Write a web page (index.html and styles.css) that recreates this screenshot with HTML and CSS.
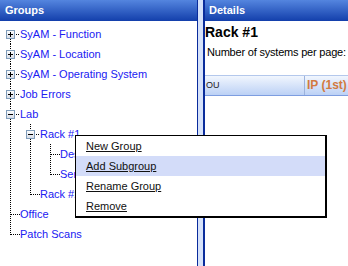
FILE: index.html
```html
<!DOCTYPE html>
<html lang="en">
<head>
    <meta charset="UTF-8">
    <title>Groups</title>
    <link rel="stylesheet" href="styles.css">
</head>
<body>
    <div class="app">
        <!-- Groups tree -->
        <div class="groups">
            <div class="panel-head">Groups</div>
            <div class="tree">
                <div class="node"><span class="cell exp first"><span class="box plus"></span></span><a class="label">SyAM - Function</a></div>
                <div class="node"><span class="cell exp"><span class="box plus"></span></span><a class="label">SyAM - Location</a></div>
                <div class="node"><span class="cell exp"><span class="box plus"></span></span><a class="label">SyAM - Operating System</a></div>
                <div class="node"><span class="cell exp"><span class="box plus"></span></span><a class="label">Job Errors</a></div>
                <div class="node"><span class="cell exp"><span class="box minus"></span></span><a class="label">Lab</a></div>
                <div class="node"><span class="cell pipe"></span><span class="cell exp"><span class="box minus"></span></span><a class="label">Rack #1</a></div>
                <div class="node"><span class="cell pipe"></span><span class="cell pipe"></span><span class="cell tee"></span><a class="label">Desktops</a></div>
                <div class="node"><span class="cell pipe"></span><span class="cell pipe"></span><span class="cell ell"></span><a class="label">Servers</a></div>
                <div class="node"><span class="cell pipe"></span><span class="cell ell"></span><a class="label">Rack #2</a></div>
                <div class="node"><span class="cell tee"></span><a class="label">Office</a></div>
                <div class="node"><span class="cell ell"></span><a class="label">Patch Scans</a></div>
            </div>
        </div>

        <div class="splitter"></div>

        <!-- Details -->
        <div class="details">
            <div class="panel-head">Details</div>
            <div class="details-body">
                <h2 class="title">Rack #1</h2>
                <p class="per-page">Number of systems per page:</p>
                <div class="grid-head">
                    <div class="col col-ou">OU</div>
                    <div class="col col-ip">IP (1st)</div>
                </div>
            </div>
        </div>

        <!-- Context menu -->
        <ul class="context-menu">
            <li><a href="#">New Group</a></li>
            <li class="active"><a href="#">Add Subgroup</a></li>
            <li><a href="#">Rename Group</a></li>
            <li><a href="#">Remove</a></li>
        </ul>
    </div>
</body>
</html>
```

FILE: styles.css
```css
* {
    margin: 0;
    padding: 0;
    box-sizing: border-box;
}

body {
    font-family: 'Liberation Sans', Arial, sans-serif;
    font-size: 11px;
    background: white;
}

.app {
    --dv: repeating-linear-gradient(to bottom, #000 0 1px, transparent 1px 2px);
    --dh: repeating-linear-gradient(to right, #000 0 1px, transparent 1px 2px);
    position: relative;
    display: flex;
    height: 266px;
    overflow: hidden;
}

/* Panel headers */
.panel-head {
    height: 21px;
    line-height: 21px;
    padding-left: 5px;
    color: white;
    font-weight: bold;
    font-size: 11px;
    background: linear-gradient(#5485df, #133fab);
    white-space: nowrap;
}

/* Groups */
.groups {
    width: 198px;
    flex: none;
    border-right: 1px solid #0a2c9c;
}

.tree {
    padding-top: 3px;
}

.node {
    display: flex;
    height: 20px;
    line-height: 20px;
    white-space: nowrap;
}

.label {
    color: #2020f2;
    text-decoration: none;
}

.cell {
    width: 20px;
    height: 20px;
    flex: none;
    background-repeat: no-repeat;
}

.cell.pipe {
    background-image: var(--dv);
    background-position: 10px 0;
    background-size: 1px 20px;
}

.cell.tee {
    background-image: var(--dv), var(--dh);
    background-position: 10px 0, 11px 10px;
    background-size: 1px 20px, 9px 1px;
}

.cell.ell {
    background-image: var(--dv), var(--dh);
    background-position: 10px 0, 11px 10px;
    background-size: 1px 11px, 9px 1px;
}

.cell.exp {
    background-image: var(--dv), var(--dv), var(--dh);
    background-position: 10px 0, 10px 15px, 16px 10px;
    background-size: 1px 6px, 1px 5px, 4px 1px;
}

.cell.exp.first {
    background-size: 0 0, 1px 5px, 4px 1px;
}

.box {
    display: block;
    width: 9px;
    height: 9px;
    margin: 6px 0 0 6px;
    border: 1px solid #7f9cba;
    background-repeat: no-repeat;
}

.box.plus {
    background-image: linear-gradient(#000, #000), linear-gradient(#000, #000), linear-gradient(#fdfdfd, #d6dde8);
    background-position: center, center, 0 0;
    background-size: 5px 1px, 1px 5px, 100% 100%;
}

.box.minus {
    background-image: linear-gradient(#000, #000), linear-gradient(#fdfdfd, #d6dde8);
    background-position: center, 0 0;
    background-size: 5px 1px, 100% 100%;
}

/* Splitter */
.splitter {
    width: 7px;
    flex: none;
    background: #d6e2fa;
    border-right: 2px solid #0a2c9c;
}

/* Details */
.details {
    flex: 1;
    min-width: 0;
    overflow: hidden;
}

.details .panel-head {
    padding-left: 4px;
}

.details-body {
    padding-top: 3px;
    white-space: nowrap;
}

.title {
    font-size: 14px;
    line-height: 16px;
    font-weight: bold;
    color: #000;
}

.per-page {
    margin-top: 6px;
    padding-left: 2px;
    line-height: 13px;
    letter-spacing: -0.2px;
    color: #000;
}

.grid-head {
    display: flex;
    margin-top: 16px;
    width: 260px;
    height: 21px;
    border-top: 1px solid #b4c8ec;
    border-bottom: 1px solid #7d9de0;
    background: linear-gradient(#f1f6fe, #bcd1f5);
}

.col {
    line-height: 19px;
}

.col-ou {
    width: 99px;
    padding-left: 1px;
    font-size: 9px;
    color: #222;
}

.col-ip {
    flex: 1;
    padding-left: 2px;
    border-left: 1px solid #9db3dc;
    font-size: 12px;
    font-weight: bold;
    color: #d27a40;
}

/* Context menu */
.context-menu {
    position: absolute;
    left: 75px;
    top: 135px;
    width: 252px;
    list-style: none;
    background: white;
    border: 1px solid #000;
    border-right-width: 2px;
    border-bottom-width: 2px;
    z-index: 10;
}

.context-menu li {
    height: 20px;
    line-height: 20px;
    padding-left: 10px;
}

.context-menu li.active {
    background: #d3dcf9;
}

.context-menu a {
    color: #111;
    text-decoration: underline;
}
```
